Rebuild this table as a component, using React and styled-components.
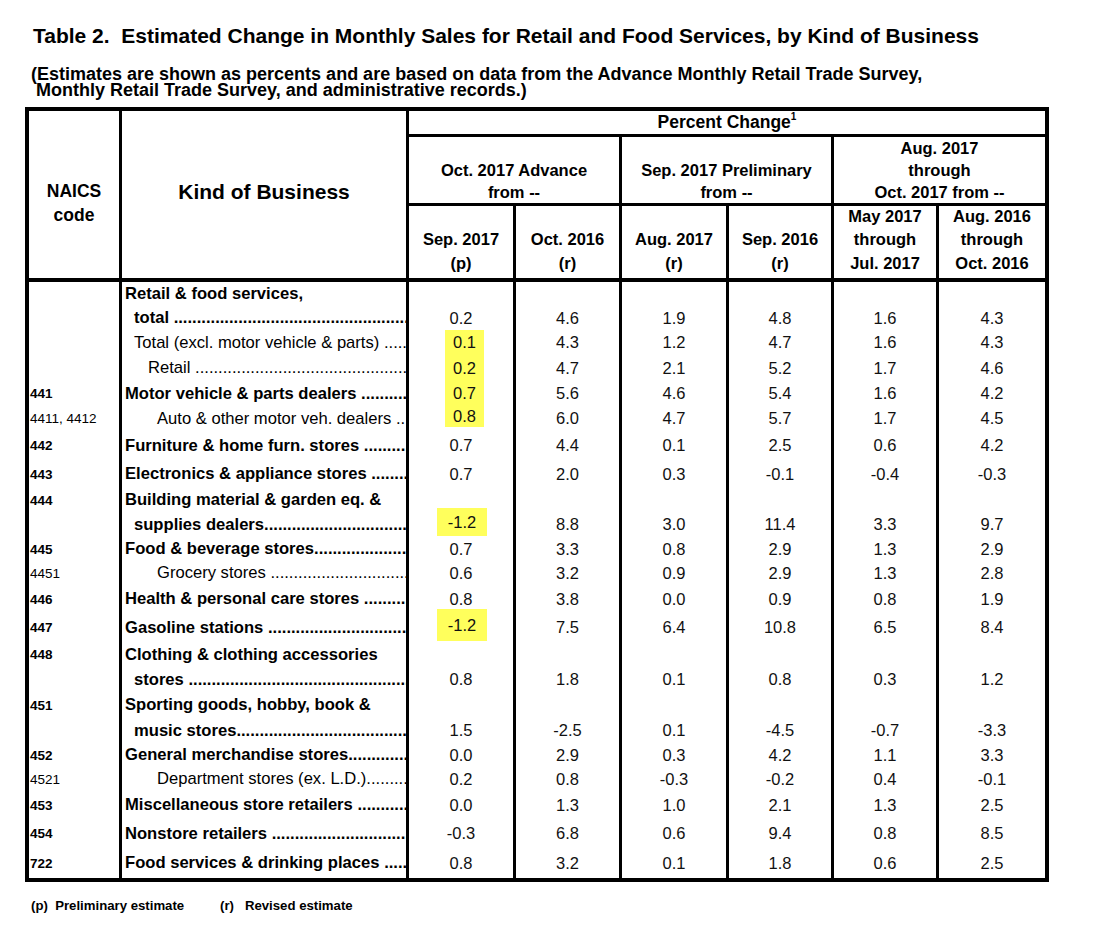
import React from 'react';
import styled, { createGlobalStyle } from 'styled-components';

const GlobalStyle = createGlobalStyle`
  body {
    margin: 0;
    background: #fff;
    color: #000;
    font-family: "Liberation Sans", Arial, sans-serif;
  }
`;

const COLS = '90px 284px 104px 103px 104px 102px 102px 106px';

const Page = styled.div`
  padding: 24px 0 40px 25px;
`;

const Title = styled.h1`
  margin: 0 0 0 8px;
  font-size: 21px;
  line-height: 24px;
  font-weight: 700;
  white-space: pre;
`;

const Subtitle = styled.p`
  margin: 18px 0 0 6px;
  font-size: 18px;
  line-height: 16px;
  font-weight: 700;
  white-space: pre;
`;

const Table = styled.div`
  margin-top: 9px;
  width: 1024px;
  box-sizing: border-box;
  border: 4px solid #000;
`;

const Head = styled.div`
  display: grid;
  grid-template-columns: ${COLS};
  grid-template-rows: 23px 66px 72px;
  gap: 3px;
  background: #000;
  border-bottom: 4px solid #000;
`;

const HeadCell = styled.div`
  background: #fff;
  display: flex;
  flex-direction: column;
  align-items: center;
  justify-content: ${(p) => p.$justify || 'flex-end'};
  text-align: center;
  font-weight: 700;
  font-size: ${(p) => p.$size || 16.5}px;
  line-height: ${(p) => p.$lh || 22}px;
  padding-top: ${(p) => p.$pt || 0}px;
  padding-bottom: ${(p) => p.$pb || 0}px;
  grid-column: ${(p) => p.$col || 'auto'};
  grid-row: ${(p) => p.$row || 'auto'};
  sup {
    font-size: 10px;
    line-height: 0;
    position: relative;
    top: -1px;
  }
`;

const Body = styled.div`
  display: flex;
  flex-direction: column;
`;

const BodyRow = styled.div`
  display: grid;
  grid-template-columns: ${COLS};
  column-gap: 3px;
  background: #000;
  height: ${(p) => p.$h}px;
`;

const Code = styled.div`
  background: #fff;
  display: flex;
  align-items: center;
  padding-left: 1px;
  font-size: 13.5px;
  font-weight: ${(p) => (p.$bold ? 700 : 400)};
  white-space: nowrap;
`;

const Label = styled.div`
  background: #fff;
  display: flex;
  align-items: center;
  padding-left: ${(p) => 3 + p.$indent}px;
  font-size: 16.6px;
  font-weight: ${(p) => (p.$bold ? 700 : 400)};
  white-space: pre;
  overflow: hidden;
`;

const LabelText = styled.span`
  flex-shrink: 0;
`;

const Leader = styled.span`
  flex: 1;
  min-width: 0;
  overflow: hidden;
`;

const Value = styled.div`
  background: #fff;
  display: flex;
  align-items: center;
  justify-content: center;
  font-size: 16.5px;
  color: #111;
`;

// highlighted estimate; "block" rows join into one strip, "end" closes it
const Mark = styled.span`
  align-self: stretch;
  display: flex;
  align-items: center;
  justify-content: center;
  width: ${(p) => (p.$kind === 'wide' ? 50 : 39)}px;
  margin-left: ${(p) => (p.$kind === 'wide' ? 2 : 7)}px;
  margin-top: ${(p) => (p.$kind === 'wide' ? -4 : 0)}px;
  margin-bottom: ${(p) => (p.$kind === 'wide' ? 1 : p.$kind === 'end' ? 4 : 0)}px;
  background: #ffff5c;
`;

const Footer = styled.div`
  margin: 16px 0 0 6px;
  display: flex;
  font-size: 13.2px;
  line-height: 16px;
  font-weight: 700;
  white-space: pre;
`;

const Note = styled.span`
  width: ${(p) => p.$w || 'auto'};
`;

const DOTS = '.'.repeat(160);

const rows = [
  { h: 24, label: 'Retail & food services,', bold: true },
  { h: 24, label: 'total ', bold: true, indent: 9, values: ['0.2', '4.6', '1.9', '4.8', '1.6', '4.3'] },
  { h: 25, label: 'Total (excl. motor vehicle & parts) ', indent: 9, mark: 'block', values: ['0.1', '4.3', '1.2', '4.7', '1.6', '4.3'] },
  { h: 26, label: 'Retail ', indent: 23, mark: 'block', values: ['0.2', '4.7', '2.1', '5.2', '1.7', '4.6'] },
  { h: 25, code: '441', label: 'Motor vehicle & parts dealers ', bold: true, mark: 'block', values: ['0.7', '5.6', '4.6', '5.4', '1.6', '4.2'] },
  { h: 25, code: '4411, 4412', label: 'Auto & other motor veh. dealers ', indent: 32, mark: 'end', values: ['0.8', '6.0', '4.7', '5.7', '1.7', '4.5'] },
  { h: 29, code: '442', label: 'Furniture & home furn. stores ', bold: true, values: ['0.7', '4.4', '0.1', '2.5', '0.6', '4.2'] },
  { h: 28, code: '443', label: 'Electronics & appliance stores ', bold: true, values: ['0.7', '2.0', '0.3', '-0.1', '-0.4', '-0.3'] },
  { h: 24, code: '444', label: 'Building material & garden eq. &', bold: true },
  { h: 25, label: 'supplies dealers', bold: true, indent: 9, mark: 'wide', values: ['-1.2', '8.8', '3.0', '11.4', '3.3', '9.7'] },
  { h: 24, code: '445', label: 'Food & beverage stores', bold: true, values: ['0.7', '3.3', '0.8', '2.9', '1.3', '2.9'] },
  { h: 24, code: '4451', label: 'Grocery stores ', indent: 32, values: ['0.6', '3.2', '0.9', '2.9', '1.3', '2.8'] },
  { h: 28, code: '446', label: 'Health & personal care stores ', bold: true, values: ['0.8', '3.8', '0.0', '0.9', '0.8', '1.9'] },
  { h: 29, code: '447', label: 'Gasoline stations ', bold: true, mark: 'wide', values: ['-1.2', '7.5', '6.4', '10.8', '6.5', '8.4'] },
  { h: 25, code: '448', label: 'Clothing & clothing accessories', bold: true },
  { h: 25, label: 'stores ', bold: true, indent: 9, values: ['0.8', '1.8', '0.1', '0.8', '0.3', '1.2'] },
  { h: 26, code: '451', label: 'Sporting goods, hobby, book &', bold: true },
  { h: 25, label: 'music stores', bold: true, indent: 9, values: ['1.5', '-2.5', '0.1', '-4.5', '-0.7', '-3.3'] },
  { h: 24, code: '452', label: 'General merchandise stores', bold: true, values: ['0.0', '2.9', '0.3', '4.2', '1.1', '3.3'] },
  { h: 24, code: '4521', label: 'Department stores (ex. L.D.)', indent: 32, values: ['0.2', '0.8', '-0.3', '-0.2', '0.4', '-0.1'] },
  { h: 28, code: '453', label: 'Miscellaneous store retailers ', bold: true, values: ['0.0', '1.3', '1.0', '2.1', '1.3', '2.5'] },
  { h: 29, code: '454', label: 'Nonstore retailers ', bold: true, values: ['-0.3', '6.8', '0.6', '9.4', '0.8', '8.5'] },
  { h: 30, code: '722', label: 'Food services & drinking places ', bold: true, values: ['0.8', '3.2', '0.1', '1.8', '0.6', '2.5'] },
];

function Row({ row }) {
  const values = row.values || ['', '', '', '', '', ''];
  const isCode = row.code && row.code.length === 3;
  return (
    <BodyRow $h={row.h}>
      <Code $bold={isCode}>{row.code || ''}</Code>
      <Label $bold={row.bold} $indent={row.indent || 0}>
        <LabelText>{row.label}</LabelText>
        {row.values && <Leader>{DOTS}</Leader>}
      </Label>
      {values.map((v, i) => (
        <Value key={i}>
          {i === 0 && row.mark ? <Mark $kind={row.mark}>{v}</Mark> : v}
        </Value>
      ))}
    </BodyRow>
  );
}

export default function App() {
  return (
    <Page>
      <GlobalStyle />
      <Title>{'Table 2.  Estimated Change in Monthly Sales for Retail and Food Services, by Kind of Business'}</Title>
      <Subtitle>
        {'(Estimates are shown as percents and are based on data from the Advance Monthly Retail Trade Survey,\n Monthly Retail Trade Survey, and administrative records.)'}
      </Subtitle>

      <Table>
        <Head>
          <HeadCell $col="1" $row="1 / 4" $justify="flex-start" $pt={68} $size={17.5} $lh={24}>
            <span>NAICS</span>
            <span>code</span>
          </HeadCell>
          <HeadCell $col="2" $row="1 / 4" $justify="flex-start" $pt={69} $size={21} $lh={24}>
            Kind of Business
          </HeadCell>
          <HeadCell $col="3 / 9" $row="1" $justify="center" $size={17.5} $lh={23}>
            <span>Percent Change<sup>1</sup></span>
          </HeadCell>

          <HeadCell $col="3 / 5" $row="2">
            <span>Oct. 2017 Advance</span>
            <span>from --</span>
          </HeadCell>
          <HeadCell $col="5 / 7" $row="2">
            <span>Sep. 2017 Preliminary</span>
            <span>from --</span>
          </HeadCell>
          <HeadCell $col="7 / 9" $row="2">
            <span>Aug. 2017</span>
            <span>through</span>
            <span>Oct. 2017 from --</span>
          </HeadCell>

          <HeadCell $row="3" $lh={23.5} $pb={3}>
            <span>Sep. 2017</span>
            <span>(p)</span>
          </HeadCell>
          <HeadCell $row="3" $lh={23.5} $pb={3}>
            <span>Oct. 2016</span>
            <span>(r)</span>
          </HeadCell>
          <HeadCell $row="3" $lh={23.5} $pb={3}>
            <span>Aug. 2017</span>
            <span>(r)</span>
          </HeadCell>
          <HeadCell $row="3" $lh={23.5} $pb={3}>
            <span>Sep. 2016</span>
            <span>(r)</span>
          </HeadCell>
          <HeadCell $row="3" $lh={23.5} $pb={3}>
            <span>May 2017</span>
            <span>through</span>
            <span>Jul. 2017</span>
          </HeadCell>
          <HeadCell $row="3" $lh={23.5} $pb={3}>
            <span>Aug. 2016</span>
            <span>through</span>
            <span>Oct. 2016</span>
          </HeadCell>
        </Head>

        <Body>
          {rows.map((row, i) => (
            <Row key={i} row={row} />
          ))}
        </Body>
      </Table>

      <Footer>
        <Note $w="189px">{'(p)  Preliminary estimate'}</Note>
        <Note>{'(r)   Revised estimate'}</Note>
      </Footer>
    </Page>
  );
}
